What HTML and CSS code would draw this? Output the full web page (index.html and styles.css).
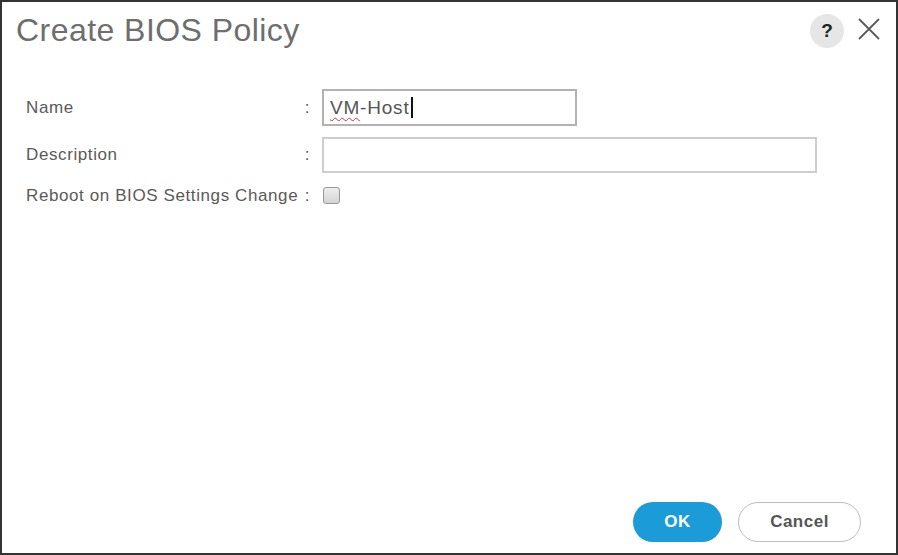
FILE: index.html
```html
<!DOCTYPE html>
<html lang="en">
    <head>
        <meta charset="UTF-8">
        <meta name="viewport" content="width=device-width, initial-scale=1.0">
        <title>Create BIOS Policy</title>
        <link rel="stylesheet" href="styles.css">
    </head>
<body>
    <div class="dialog">
        <div class="dialog-header">
            <h1>Create BIOS Policy</h1>
            <div class="header-tools">
                <span class="help-btn">?</span>
                <span class="close-btn">
                    <svg width="22" height="22" viewBox="0 0 22 22">
                        <path d="M1 1 L21 21 M21 1 L1 21" stroke="#5a5a5a" stroke-width="1.8" fill="none"/>
                    </svg>
                </span>
            </div>
        </div>

        <form class="policy-form">
            <div class="form-row">
                <label class="field-label"><span>Name</span><span class="colon">:</span></label>
                <div class="text-field name-field focused">
                    <span class="misspelled">VM</span>-Host<span class="caret"></span>
                </div>
            </div>
            <div class="form-row">
                <label class="field-label"><span>Description</span><span class="colon">:</span></label>
                <div class="text-field desc-field"></div>
            </div>
            <div class="form-row check-row">
                <label class="field-label"><span>Reboot on BIOS Settings Change</span><span class="colon">:</span></label>
                <input type="checkbox" class="checkbox">
            </div>
        </form>

        <div class="dialog-footer">
            <button type="button" class="btn btn-ok">OK</button>
            <button type="button" class="btn btn-cancel">Cancel</button>
        </div>
    </div>
</body>
</html>
```

FILE: styles.css
```css
body {
    margin: 0;
    font-family: "Liberation Sans", Arial, sans-serif;
    background-color: #fff;
}
.dialog {
    width: 898px;
    height: 555px;
    box-sizing: border-box;
    border: 2px solid #333;
    display: flex;
    flex-direction: column;
}
.dialog-header {
    height: 55px;
    display: flex;
    align-items: center;
    justify-content: space-between;
    padding: 0 16px 0 14px;
}
h1 {
    margin: 0;
    font-size: 32px;
    font-weight: normal;
    letter-spacing: 0.45px;
    color: #6e6e6e;
    line-height: 40px;
}
.header-tools {
    display: flex;
    align-items: center;
    gap: 14px;
}
.help-btn {
    width: 34px;
    height: 34px;
    border-radius: 50%;
    background-color: #e6e6e6;
    color: #222;
    font-weight: bold;
    font-size: 19px;
    display: flex;
    align-items: center;
    justify-content: center;
    margin-top: 2px;
}
.close-btn {
    display: flex;
    width: 22px;
    height: 22px;
    margin-top: -1px;
}
.policy-form {
    padding: 32px 0 0 24px;
    display: flex;
    flex-direction: column;
    gap: 11px;
}
.form-row {
    display: flex;
    align-items: center;
    gap: 12px;
}
.field-label {
    width: 284px;
    display: flex;
    justify-content: space-between;
    font-size: 17px;
    letter-spacing: 0.6px;
    color: #5a5a5a;
}
.text-field {
    box-sizing: border-box;
    border: 2px solid #cdcdcd;
    padding: 0 6px;
    display: flex;
    align-items: center;
    font-size: 19px;
    letter-spacing: 0.8px;
    color: #555;
}
.text-field.focused {
    border-color: #b2b2b2;
}
.name-field {
    width: 255px;
    height: 37px;
}
.desc-field {
    width: 495px;
    height: 36px;
}
.misspelled {
    text-decoration: underline wavy #e03030;
    text-decoration-thickness: 1px;
    text-underline-offset: 3px;
}
.caret {
    display: inline-block;
    width: 2px;
    height: 21px;
    background-color: #111;
    margin-left: 1px;
}
.check-row {
    height: 22px;
}
.check-row .field-label {
    padding-top: 2px;
}
.checkbox {
    -webkit-appearance: none;
    appearance: none;
    margin: 0 0 0 1px;
    width: 17px;
    height: 17px;
    border: 1px solid #999;
    border-radius: 3px;
    background: linear-gradient(#eee, #d4d4d4);
    box-sizing: border-box;
}
.dialog-footer {
    margin-top: auto;
    display: flex;
    justify-content: flex-end;
    gap: 16px;
    padding: 0 35px 11px 0;
}
.btn {
    height: 40px;
    border-radius: 20px;
    font-family: "Liberation Sans", Arial, sans-serif;
    font-weight: bold;
    font-size: 17px;
    letter-spacing: 0.5px;
    cursor: pointer;
}
.btn-ok {
    width: 89px;
    border: none;
    background-color: #1b9bd7;
    color: #fff;
}
.btn-cancel {
    width: 123px;
    border: 1px solid #bdbdbd;
    background-color: #fff;
    color: #555;
}
```
